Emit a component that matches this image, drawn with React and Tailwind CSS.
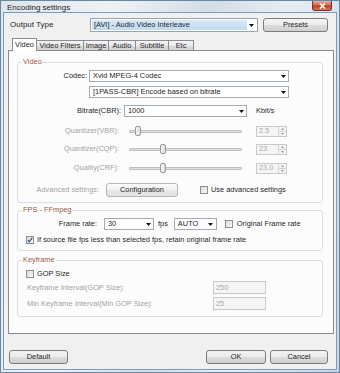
export default function App() {
  return (
    <div className="flex h-[373px] w-[340px] flex-col overflow-hidden border border-[#6b879f] bg-[linear-gradient(100deg,#dde5ec_0%,#eef2f6_28%,#d2dde8_52%,#e7edf3_72%,#c3d6e7_100%)] font-['Liberation_Sans',Arial,sans-serif] text-[7.4px] leading-none text-[#262626]">

      {/* Title bar */}
      <div className="flex h-[11px] shrink-0 items-start justify-between pl-[6px] pr-[7px]">
        <span className="pt-[3px] text-[8px] text-[#1e1e1e]">Encoding settings</span>
        <div className="flex h-[10px] w-[20px] items-center justify-center rounded-b-[3px] border border-t-0 border-[#7a3426] bg-[linear-gradient(#eab2a2,#d4654b_45%,#bf3a20_55%,#d77a5c)]">
          <svg width="7" height="6" viewBox="0 0 7 6">
            <path d="M1 0.5L6 5.5M6 0.5L1 5.5" stroke="#fff" strokeWidth="1.6" />
          </svg>
        </div>
      </div>

      {/* Client area */}
      <div className="mx-[2px] mb-[2px] flex flex-1 flex-col border border-[#7e9bb6] bg-[#f0f0f0]">

        {/* Output type */}
        <div className="mt-[5px] flex h-[14px] items-center pl-[6px]">
          <span className="w-[80px] text-[8px]">Output Type</span>
          <div className="flex h-[14px] w-[168px] items-center border border-[#98a3b0] bg-white p-[1px]">
            <div className="flex h-full flex-1 items-center bg-[linear-gradient(#d7e8f8,#c0dbf4)] pl-[2px]">
              [AVI] - Audio Video Interleave
            </div>
            <div className="flex w-[9px] justify-center">
              <Caret />
            </div>
          </div>
          <Button className="ml-[5px] h-[14px] w-[65px]">Presets</Button>
        </div>

        {/* Tabs */}
        <div className="mt-[6px] flex h-[12px] items-end pl-[8px]">
          <div className="relative z-10 -mb-px flex h-[13px] w-[25px] items-center justify-center border border-b-0 border-[#898c95] bg-white">
            Video
          </div>
          <Tab className="w-[48px]">Video Filters</Tab>
          <Tab className="w-[26px]">Image</Tab>
          <Tab className="w-[28px]">Audio</Tab>
          <Tab className="w-[34px]">Subtitle</Tab>
          <Tab className="w-[26px]">Etc</Tab>
        </div>

        {/* Tab panel */}
        <div className="ml-[4px] flex h-[284px] w-[326px] flex-col border border-[#898c95] bg-[#fcfcfd]">

          {/* Video group */}
          <Group label="Video" className="mt-[6px]">
            <div className="flex flex-col pb-[5px] pt-[3px]">
              <div className="flex h-[12px] items-center">
                <span className="w-[69px] text-right">Codec:</span>
                <Combo className="ml-[2px] w-[200px]">Xvid MPEG-4 Codec</Combo>
              </div>
              <div className="mt-[4px] flex h-[12px] items-center">
                <Combo className="ml-[71px] w-[200px]">[1PASS-CBR] Encode based on bitrate</Combo>
              </div>
              <div className="mt-[7px] flex h-[12px] items-center">
                <span className="w-[103px] text-right">Bitrate(CBR):</span>
                <Combo className="ml-[3px] w-[123px]">1000</Combo>
                <span className="ml-[9px]">Kbit/s</span>
              </div>
              <div className="mt-[8px] flex h-[12px] items-center">
                <span className="w-[101px] text-right text-[#a2a2a2]">Quantizer(VBR):</span>
                <Slider thumb="left-[6px]" />
                <Spin>2.5</Spin>
              </div>
              <div className="mt-[6px] flex h-[12px] items-center">
                <span className="w-[101px] text-right text-[#a2a2a2]">Quantizer(CQP):</span>
                <Slider thumb="left-[31px]" />
                <Spin>23</Spin>
              </div>
              <div className="mt-[7px] flex h-[12px] items-center">
                <span className="w-[101px] text-right text-[#a2a2a2]">Quality(CRF):</span>
                <Slider thumb="left-[31px]" />
                <Spin>23.0</Spin>
              </div>
              <div className="mt-[9px] flex h-[14px] items-center">
                <span className="w-[81px] text-right text-[#a2a2a2]">Advanced settings:</span>
                <Button className="ml-[7px] h-[14px] w-[72px]" light>Configuration</Button>
                <Check className="ml-[22px]" />
                <span className="ml-[3px]">Use advanced settings</span>
              </div>
            </div>
          </Group>

          {/* FPS group */}
          <Group label="FPS - FFmpeg" className="mt-[2px]">
            <div className="flex flex-col pb-[6px] pt-[3px]">
              <div className="flex h-[12px] items-center">
                <span className="w-[79px] text-right">Frame rate:</span>
                <Combo className="ml-[7px] w-[50px]">30</Combo>
                <span className="ml-[4px]">fps</span>
                <Combo className="ml-[6px] w-[43px]">AUTO</Combo>
                <Check className="ml-[8px]" />
                <span className="ml-[4px]">Original Frame rate</span>
              </div>
              <div className="mt-[5px] flex h-[9px] items-center">
                <Check className="ml-[8px]" checked />
                <span className="ml-[3px]">If source file fps less than selected fps, retain original frame rate</span>
              </div>
            </div>
          </Group>

          {/* Keyframe group */}
          <Group label="Keyframe" className="mt-[4px]">
            <div className="flex flex-col pb-[6px] pt-[4px]">
              <div className="flex h-[9px] items-center">
                <Check className="ml-[8px]" />
                <span className="ml-[3px]">GOP Size</span>
              </div>
              <div className="mt-[3px] flex h-[13px] items-center">
                <span className="ml-[9px] w-[186px] text-[#a2a2a2]">Keyframe Interval(GOP Size):</span>
                <Field>250</Field>
              </div>
              <div className="mt-[3px] flex h-[13px] items-center">
                <span className="ml-[9px] w-[186px] text-[#a2a2a2]">Min Keyframe Interval(Min GOP Size):</span>
                <Field>25</Field>
              </div>
            </div>
          </Group>
        </div>

        {/* Bottom buttons */}
        <div className="mt-[16px] flex h-[14px] items-center pl-[5px]">
          <Button className="h-[14px] w-[59px]">Default</Button>
          <Button className="ml-[138px] h-[14px] w-[60px]">OK</Button>
          <Button className="ml-[4px] h-[14px] w-[58px]">Cancel</Button>
        </div>
      </div>
    </div>
  );
}

function Caret() {
  return (
    <svg width="5" height="3" viewBox="0 0 5 3">
      <path d="M0 0H5L2.5 3Z" fill="#111" />
    </svg>
  );
}

function Tab({ className, children }) {
  return (
    <div className={`-ml-px flex h-[10px] items-center justify-center border border-b-0 border-[#898c95] bg-[linear-gradient(#f4f4f4,#e8e8e8_50%,#dcdcdc_51%,#d2d2d2)] ${className}`}>
      {children}
    </div>
  );
}

function Button({ className, children, light }) {
  return (
    <div
      className={`flex items-center justify-center rounded-[3px] border ${
        light
          ? "border-[#b4b8bc] bg-[linear-gradient(#fafafa,#f1f1f1_50%,#e8e8e8_51%,#e2e2e2)]"
          : "border-[#7c7c7c] bg-[linear-gradient(#f4f4f4,#ebebeb_50%,#dddddd_51%,#cfcfcf)]"
      } ${className}`}
    >
      {children}
    </div>
  );
}

function Combo({ className, children }) {
  return (
    <div className={`flex h-[12px] items-center border border-[#a3abb6] bg-white ${className}`}>
      <div className="flex-1 pl-[3px]">{children}</div>
      <div className="flex w-[10px] justify-center">
        <Caret />
      </div>
    </div>
  );
}

function Group({ label, className, children }) {
  return (
    <fieldset className={`ml-[8px] mr-[10px] rounded-[3px] border border-[#d5dfe5] ${className}`}>
      <legend className="ml-[4px] px-[1px] leading-[10px] text-[#a35a46]">{label}</legend>
      {children}
    </fieldset>
  );
}

function Slider({ thumb }) {
  return (
    <div className="relative ml-[10px] flex h-[12px] w-[113px] items-center">
      <div className="h-[3px] w-full rounded-[1px] border border-[#bfbfbf] bg-[#e2e2e2]" />
      <div className={`absolute top-[1px] h-[10px] w-[6px] rounded-[2px] border border-[#9a9a9a] bg-[linear-gradient(90deg,#f6f6f6,#dcdcdc)] ${thumb}`} />
    </div>
  );
}

function Spin({ children }) {
  return (
    <div className="ml-[14px] flex h-[11px] w-[31px] border border-[#c2cad2] bg-[#f5f5f5]">
      <div className="flex flex-1 items-center pl-[2px] text-[#a8a8a8]">{children}</div>
      <div className="flex w-[8px] flex-col border-l border-[#d4d4d4]">
        <div className="flex flex-1 items-center justify-center border-b border-[#d4d4d4]">
          <svg width="3" height="2" viewBox="0 0 3 2"><path d="M0 2H3L1.5 0Z" fill="#9c9c9c" /></svg>
        </div>
        <div className="flex flex-1 items-center justify-center">
          <svg width="3" height="2" viewBox="0 0 3 2"><path d="M0 0H3L1.5 2Z" fill="#9c9c9c" /></svg>
        </div>
      </div>
    </div>
  );
}

function Field({ children }) {
  return (
    <div className="flex h-[13px] w-[53px] items-center border border-[#c2cad2] bg-[#f5f5f5] pl-[2px] text-[#a8a8a8]">
      {children}
    </div>
  );
}

function Check({ className, checked }) {
  return (
    <div className={`flex h-[8px] w-[8px] shrink-0 items-center justify-center border border-[#8e8f8f] bg-[linear-gradient(135deg,#d9d9d9,#fafafa)] ${className}`}>
      {checked && (
        <svg width="6" height="6" viewBox="0 0 6 6">
          <path d="M0.8 3.2L2.3 4.8L5.2 0.9" stroke="#34528a" strokeWidth="1.2" fill="none" />
        </svg>
      )}
    </div>
  );
}
